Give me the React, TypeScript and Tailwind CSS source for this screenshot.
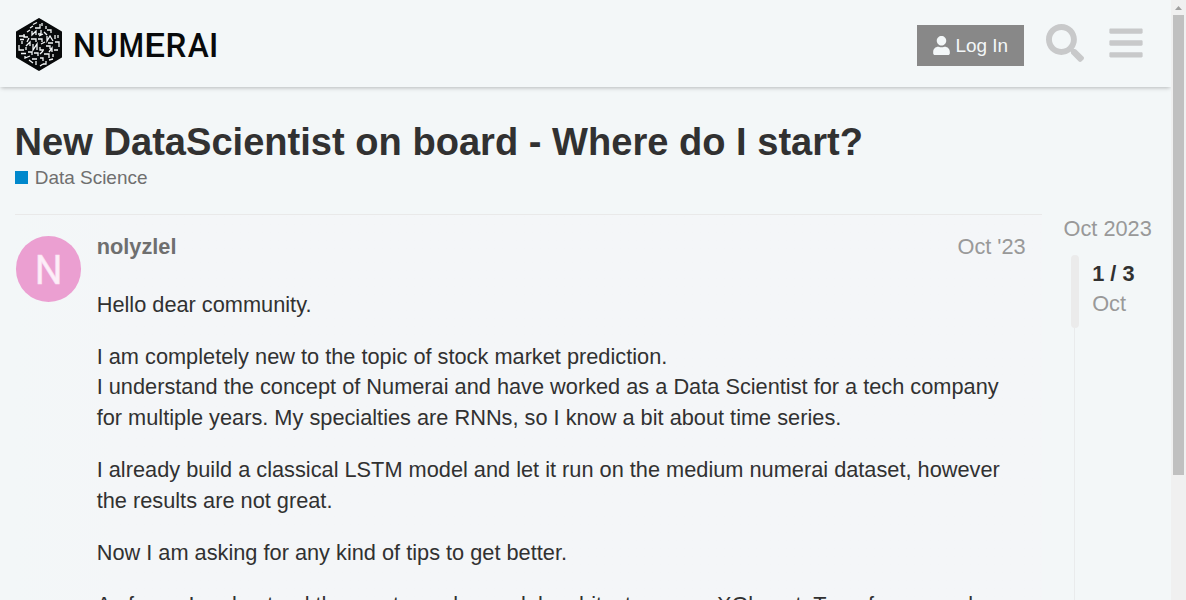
import { FaSearch, FaBars, FaUser } from 'react-icons/fa';

const marks =
  'M17 6.5l4-2M19 10h5v-4M26 5v3M14 10l3-2M25 12v4h-3M30 8v3M16 13v4l4-4v4M31 12h4v3M8 16v3h4M11 14l3-2M3 18h6M23 18l4-2M28 14l3 3M4 21.5h4M13 20l-2 4M15 21h5v3M22 21h4v3M31 18v5l3-5 3 5M39 17v4M42 20v-3M6 26v-3M10 28l4-4v4M17 26v6l4-6v6M25 26l4-2M32 25h5M39 24h4v5M3 27v5h5M10 32v-3M24 29v3h4M30 28h4v3M33 34l3-4v4M38 32l4 0M12 34h4v3M5 35.5h5M18 35h4v3M24 36l3-3M28 36h5v4M9 38v2l5-2M16 41h5M24 40h3v3M33 42l4-1M37 36v3M13 42l4 3M20 43v4M24 48l3-2M30 43v3h-3';

function Logo() {
  return (
    <svg className="block" width="204" height="54" viewBox="0 0 204 54" aria-label="Numerai">
      <path d="M23 1 45 14V39L23 52 1 39V14Z" fill="#080a0b" stroke="#080a0b" strokeWidth="2" strokeLinejoin="round" />
      <path d={marks} fill="none" stroke="#f4f7f8" strokeWidth="1.3" />
      <text y="38.5" className="font-['Roboto',sans-serif] text-[33px] font-medium" fill="#080a0b">
        <tspan x="57" textLength="22.8" lengthAdjust="spacingAndGlyphs">N</tspan>
        <tspan x="80.4" textLength="21.4" lengthAdjust="spacingAndGlyphs">U</tspan>
        <tspan x="102.7" textLength="25.2" lengthAdjust="spacingAndGlyphs">M</tspan>
        <tspan x="128.2" textLength="20.8" lengthAdjust="spacingAndGlyphs">E</tspan>
        <tspan x="149.6" textLength="20.8" lengthAdjust="spacingAndGlyphs">R</tspan>
        <tspan x="171.8" textLength="21" lengthAdjust="spacingAndGlyphs">A</tspan>
        <tspan x="193.1" textLength="9.3" lengthAdjust="spacingAndGlyphs">I</tspan>
      </text>
    </svg>
  );
}

function Header() {
  return (
    <header className="relative z-10 flex h-[87px] shrink-0 items-start bg-[#f3f7f8] pl-4 shadow-[0_2px_4px_-1px_rgba(0,0,0,0.25)]">
      <div className="pt-[18px]"><Logo /></div>
      <button className="mt-[25px] ml-auto flex h-[41px] w-[107px] items-center gap-[5.5px] bg-[#888] pl-4 text-[18.94px] text-[#f3f7f8]">
        <FaUser className="h-[19px] w-[17px] shrink-0" />
        <span className="pt-px whitespace-nowrap">Log In</span>
      </button>
      <FaSearch className="mt-6 ml-[22px] h-[38px] w-[38px] text-[#c8c9ca]" />
      <FaBars className="mt-6 mr-[28px] ml-[25px] h-[38px] w-[34px] text-[#c8c9ca]" />
    </header>
  );
}

function Post() {
  return (
    <article className="flex w-[1027px] border-t border-[#e9e9e9] bg-linear-to-r from-[#f3f7f8] via-[#f4f6f8] via-10% to-[#f4f6f8]">
      <div className="mt-[21px] ml-px flex h-[66px] w-[65px] shrink-0 items-center justify-center rounded-full bg-[#eb9fd1] pt-[3px] font-['Roboto',sans-serif] text-[41px] text-[#fdeef8]">
        <span className="scale-x-95 [-webkit-text-stroke:0.5px_#fbe0f2]">N</span>
      </div>
      <div className="ml-[15.7px] min-w-0 flex-1 pr-[16.3px] pt-4">
        <div className="flex justify-between leading-[31px]">
          <b className="text-[#6f6f6f]">nolyzlel</b>
          <span className="text-[#999]">Oct '23</span>
        </div>
        <div className="mt-[27.68px] space-y-[21.86px] whitespace-nowrap text-[#313131] leading-[30.46px]">
          <p>Hello dear community.</p>
          <p>I am completely new to the topic of stock market prediction.<br />I understand the concept of Numerai and have worked as a Data Scientist for a tech company<br />for multiple years. My specialties are RNNs, so I know a bit about time series.</p>
          <p>I already build a classical LSTM model and let it run on the medium numerai dataset, however<br />the results are not great.</p>
          <p>Now I am asking for any kind of tips to get better.</p>
          <p>As far as I understand the most popular model architectures are XGboost, Transformer and</p>
        </div>
      </div>
    </article>
  );
}

function Timeline() {
  return (
    <aside className="ml-[21.5px] flex flex-col whitespace-nowrap leading-[30px]">
      <span className="text-[#999]">Oct 2023</span>
      <div className="mt-[11px] flex flex-1">
        <div className="ml-[7.5px] flex w-2 flex-col items-center">
          <div className="h-[73px] w-2 shrink-0 rounded bg-[#ebebeb]" />
          <div className="mr-px w-px flex-1 bg-[#e9ebec]" />
        </div>
        <div className="ml-[13.2px] pt-1">
          <b className="block text-[#313131]">1 / 3</b>
          <span className="text-[#999]">Oct</span>
        </div>
      </div>
    </aside>
  );
}

export default function App() {
  return (
    <div className="flex h-[600px] w-[1186px] overflow-hidden bg-[#f3f7f8] font-['Liberation_Sans',sans-serif] text-[21.76px]">
      <div className="flex w-[1171px] shrink-0 flex-col overflow-hidden">
        <Header />
        <main className="flex min-h-0 flex-1 flex-col pl-[15px]">
          <h1 className="mt-[31px] -ml-[0.4px] text-[38.1px] leading-[48px] font-bold whitespace-nowrap text-[#313131]">New DataScientist on board - Where do I start?</h1>
          <div className="flex h-6 items-center gap-[6.8px] text-[18.94px] text-[#6f6f6f]">
            <i className="-mt-px size-[13px] bg-[#0088cc]" />
            <span>Data Science</span>
          </div>
          <div className="mt-6 flex min-h-0 flex-1">
            <Post />
            <Timeline />
          </div>
        </main>
      </div>
      <div className="flex flex-1 flex-col items-center bg-[#f0f0f0]">
        <svg className="h-[15px] w-[11px] shrink-0" viewBox="0 0 11 15"><path d="M2 10 5.5 6 9 10Z" fill="#a0a0a0" /></svg>
        <div className="h-[460px] w-[11px] shrink-0 bg-[#c0c0c0]" />
      </div>
    </div>
  );
}
